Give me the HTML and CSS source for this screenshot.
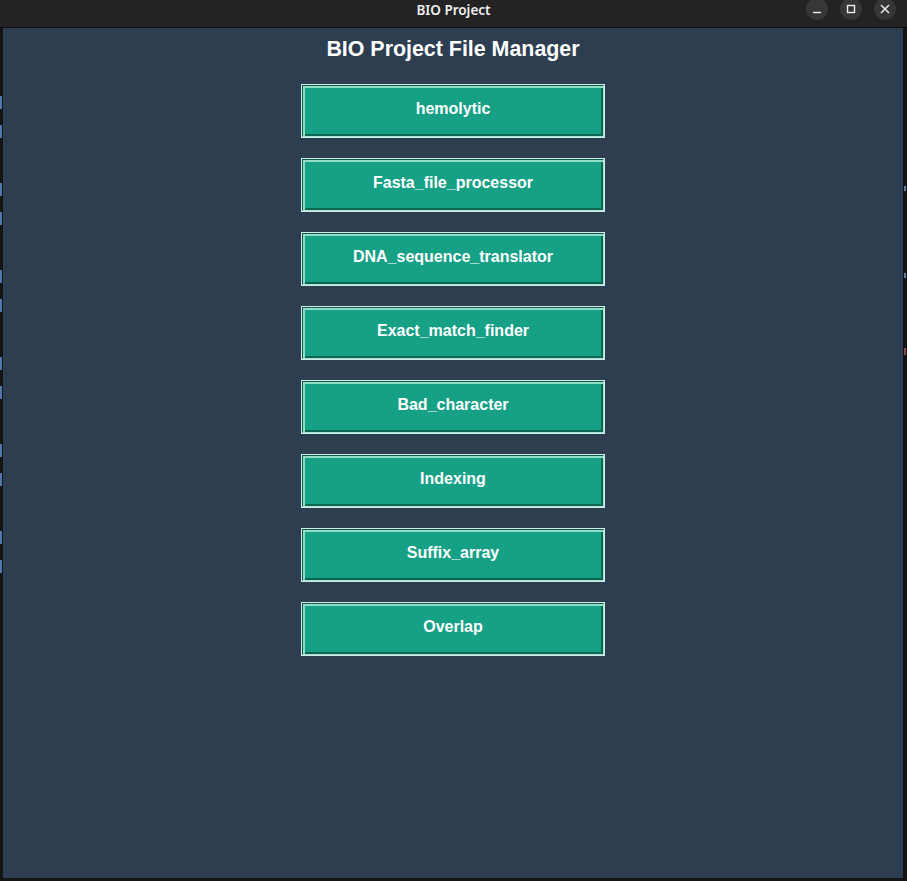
FILE: index.html
```html
<!DOCTYPE html>
<html lang="en">
<head>
<meta charset="utf-8">
<title>BIO Project</title>
<link rel="stylesheet" href="styles.css">
</head>
<body>
<div class="titlebar">
  <span class="titlebar-title">BIO Project</span>
  <div class="controls">
    <span class="ctrl"><svg width="10" height="10" viewBox="0 0 10 10"><path d="M1 8.5h8" stroke="#ececec" stroke-width="1.4"/></svg></span>
    <span class="ctrl"><svg width="10" height="10" viewBox="0 0 10 10"><rect x="1.5" y="1.5" width="7" height="7" fill="none" stroke="#ececec" stroke-width="1.4"/></svg></span>
    <span class="ctrl"><svg width="10" height="10" viewBox="0 0 10 10"><path d="M1 1L9 9M9 1L1 9" stroke="#ececec" stroke-width="1.5"/></svg></span>
  </div>
</div>
<div class="frame">
  <div class="gutter gutter-left"></div>
  <main class="window">
    <h1 class="heading">BIO Project File Manager</h1>
    <div class="buttons">
      <button class="btn">hemolytic</button>
      <button class="btn">Fasta_file_processor</button>
      <button class="btn">DNA_sequence_translator</button>
      <button class="btn">Exact_match_finder</button>
      <button class="btn">Bad_character</button>
      <button class="btn">Indexing</button>
      <button class="btn">Suffix_array</button>
      <button class="btn">Overlap</button>
    </div>
  </main>
  <div class="gutter gutter-right"></div>
</div>
</body>
</html>
```
FILE: styles.css
```css
html, body {
  margin: 0;
  padding: 0;
  background: #141414;
  width: 907px;
  height: 881px;
  overflow: hidden;
}

.titlebar {
  height: 27px;
  background: #232323;
  border-bottom: 1px solid #0c0c0c;
  display: flex;
  align-items: center;
  justify-content: center;
  position: relative;
}

.titlebar-title {
  font-family: "Noto Sans", "DejaVu Sans", sans-serif;
  font-weight: 600;
  font-size: 13.5px;
  color: #f0f0f0;
  margin-top: -8px;
}

.controls {
  position: absolute;
  right: 11px;
  top: -2px;
  display: flex;
  gap: 12px;
}

.ctrl {
  width: 22px;
  height: 22px;
  border-radius: 50%;
  background: #373737;
  display: flex;
  align-items: center;
  justify-content: center;
}

.frame {
  display: flex;
  height: 850px;
}

.gutter {
  flex: none;
}

.gutter-left {
  width: 3px;
  background-image: repeating-linear-gradient(to bottom, #4f78ad 0 13px, transparent 13px 29px, #4f78ad 29px 42px, transparent 42px 87px);
  background-size: 2px 477px;
  background-position: 0 68px;
  background-repeat: no-repeat;
}

.gutter-right {
  width: 4px;
  background-image:
    linear-gradient(#5b7fa8, #5b7fa8),
    linear-gradient(#5b7fa8, #5b7fa8),
    linear-gradient(#8a4a46, #8a4a46);
  background-size: 2px 5px, 2px 5px, 2px 7px;
  background-position: 1px 158px, 1px 245px, 1px 320px;
  background-repeat: no-repeat;
}

.window {
  width: 900px;
  height: 850px;
  background: #2c3e50;
  display: flex;
  flex-direction: column;
  align-items: center;
}

.heading {
  margin: 9px 0 0;
  font-family: "Liberation Sans", Arial, sans-serif;
  font-weight: bold;
  font-size: 21.4px;
  line-height: 24px;
  color: #ffffff;
}

.buttons {
  margin-top: 24px;
  display: flex;
  flex-direction: column;
  gap: 22px;
}

.btn {
  width: 302px;
  height: 52px;
  margin: 0;
  padding: 0;
  background: #16a085;
  color: #ffffff;
  font-family: "Liberation Sans", Arial, sans-serif;
  font-weight: bold;
  font-size: 16px;
  border: 1px solid;
  border-color: #0b5c4a #a5e3d4 #a5e3d4 #0b5c4a;
  box-shadow:
    0 0 0 1px #d3ebe5,
    inset 2px 2px 0 #92dcc6,
    inset -2px -2px 0 #0d6652;
  padding-bottom: 5px;
}
```
